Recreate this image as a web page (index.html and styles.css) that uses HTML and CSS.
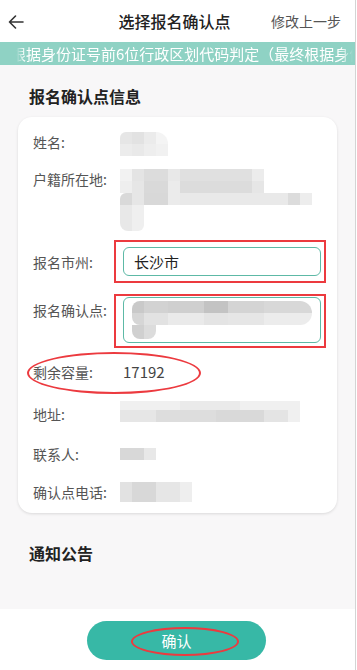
FILE: index.html
```html
<!DOCTYPE html>
<html lang="zh">
<head>
<meta charset="utf-8">
<link rel="stylesheet" href="styles.css">
</head>
<body>
<div class="app">
  <header class="topbar">
    <span class="back">
      <svg width="16" height="14" viewBox="0 0 16 14"><path d="M15 7H1.5M7.5 1L1.5 7l6 6" fill="none" stroke="#333" stroke-width="1.6" stroke-linecap="round" stroke-linejoin="round"/></svg>
    </span>
    <h1 class="title">选择报名确认点</h1>
    <span class="prev">修改上一步</span>
  </header>
  <div class="notice"><span class="notice-text">根据身份证号前6位行政区划代码判定（最终根据身份证号确认）</span></div>
  <main class="content">
    <h2 class="sec-title">报名确认点信息</h2>
    <section class="card">
      <div class="row r1">
        <span class="label">姓名:</span>
        <span class="blur b-name"></span>
      </div>
      <div class="row r2">
        <span class="label">户籍所在地:</span>
        <span class="blur-stack">
          <span class="blur b-h1"></span>
          <span class="blur b-h2"></span>
          <span class="blur b-h3"></span>
        </span>
      </div>
      <div class="row r3">
        <span class="label">报名市州:</span>
        <span class="field">长沙市</span>
        <span class="mark-rect m1"></span>
      </div>
      <div class="row r4">
        <span class="label">报名确认点:</span>
        <span class="field tall">
          <span class="blur b-p1"></span>
          <span class="blur b-p2"></span>
        </span>
        <span class="mark-rect m2"></span>
      </div>
      <div class="row r5">
        <span class="label">剩余容量:</span>
        <span class="value">17192</span>
        <span class="mark-oval"></span>
      </div>
      <div class="row r6">
        <span class="label">地址:</span>
        <span class="blur b-addr"></span>
      </div>
      <div class="row r7">
        <span class="label">联系人:</span>
        <span class="blur b-contact"></span>
      </div>
      <div class="row r8">
        <span class="label">确认点电话:</span>
        <span class="blur b-phone"></span>
      </div>
    </section>
    <h2 class="sec-title notice-title">通知公告</h2>
  </main>
  <footer class="bottom">
    <button class="confirm">确认<span class="btn-oval"></span></button>
  </footer>
</div>
</body>
</html>
```
FILE: styles.css
```css
* { box-sizing: border-box; }
html, body { margin: 0; padding: 0; background: #fff; }
body {
  font-family: "Noto Sans CJK SC", "Noto Sans", sans-serif;
  color: #333;
}
.app {
  width: 356px;
  height: 670px;
  border-right: 1px solid #d4d4d4;
  display: flex;
  flex-direction: column;
  overflow: hidden;
}
.topbar {
  height: 42px;
  display: flex;
  align-items: center;
  background: #fff;
}
.back { width: 40px; padding-left: 8px; display: flex; align-items: center; padding-top: 1px; }
.title {
  margin: 0;
  flex: 1;
  text-align: center;
  font-size: 16px;
  font-weight: 500;
  color: #222;
  padding-left: 40px;
}
.prev { font-size: 14px; color: #555; padding-right: 14px; width: 86px; text-align: right; }
.notice {
  height: 23px;
  background: #8fd2c4;
  overflow: hidden;
  white-space: nowrap;
  display: flex;
  align-items: center;
  padding-left: 11px;
}
.notice-text {
  color: #fff;
  font-size: 15px;
  line-height: 23px;
  -webkit-mask-image: linear-gradient(90deg, transparent 0, transparent 5px, #000 14px, #000 330px, transparent 342px);
  mask-image: linear-gradient(90deg, transparent 0, transparent 5px, #000 14px, #000 330px, transparent 342px);
}
.content {
  flex: 1;
  background: #f8f7f8;
  padding: 20px 18px 0 18px;
}
.sec-title {
  margin: 0;
  font-size: 16px;
  font-weight: 700;
  color: #222;
  line-height: 22px;
  padding-left: 11px;
}
.card {
  margin-top: 10px;
  background: #fff;
  border-radius: 14px;
  box-shadow: 0 1px 3px rgba(0,0,0,0.12);
  padding: 15px 15px 11px 15px;
}
.row { display: flex; align-items: flex-start; position: relative; }
.label { width: 90px; flex: none; font-size: 14px; color: #555; line-height: 20px; }
.value { font-size: 15px; color: #444; line-height: 20px; }
.r2 { margin-top: 13px; }
.r3 { margin-top: 16px; align-items: center; }
.r4 { margin-top: 21px; }
.r4 .label { padding-top: 3px; }
.r5 { margin-top: 19px; }
.r6 { margin-top: 19px; }
.r6 .label { padding-top: 3px; }
.r7 { margin-top: 20px; }
.r8 { margin-top: 18px; }

.field {
  width: 198px;
  height: 29px;
  border: 1px solid #5db9a6;
  border-radius: 6px;
  font-size: 15px;
  color: #222;
  display: flex;
  align-items: center;
  padding-left: 10px;
}
.field.tall {
  height: 46px;
  flex-direction: column;
  align-items: flex-start;
  justify-content: flex-start;
  padding: 3px 0 0 8px;
}

.blur { display: block; background: #e6e6e6; }
.b-name {
  margin-left: -3px;
  width: 48px; height: 24px;
  border-radius: 6px 12px 0 0;
  background:
    linear-gradient(90deg, #e6e6e6 0 12px, #e2e2e2 12px 24px, #ebebeb 24px 36px, #f4f4f4 36px 48px) top / 100% 12px no-repeat,
    linear-gradient(90deg, #ececec 0 12px, #e9e9e9 12px 24px, #eeeeee 24px 36px, #f1f1f1 36px 48px) bottom / 100% 12px no-repeat;
}
.blur-stack { display: flex; flex-direction: column; margin-left: -3px; }
.b-h1 { width: 144px; height: 24px;
  background:
    linear-gradient(90deg, #f2f2f2 0 12px, #e4e4e4 12px 24px, #dcdcdc 24px 48px, #e8e8e8 48px 60px, #e0e0e0 60px 132px, #ececec 132px 144px) top / 100% 12px no-repeat,
    linear-gradient(90deg, #eeeeee 0 12px, #e6e6e6 12px 24px, #d9d9d9 24px 48px, #ebebeb 48px 60px, #dcdcdc 60px 132px, #e6e6e6 132px 144px) bottom / 100% 12px no-repeat; }
.b-h2 { width: 192px; height: 12px; border-radius: 6px 0 0 0;
  background: linear-gradient(90deg, #d9d9d9 0 12px, #e6e6e6 12px 24px, #d8d8d8 24px 48px, #ebebeb 48px 60px, #e9e9e9 60px 168px, #dcdcdc 168px 180px, #ededed 180px 192px); }
.b-h3 { width: 24px; height: 26px; border-radius: 0 0 6px 8px;
  background: linear-gradient(90deg, #e8e8e8 0 12px, #efefef 12px 24px); }
.b-p1 { width: 180px; height: 24px; border-radius: 8px 12px 12px 8px;
  background:
    linear-gradient(90deg, #c9c9c9 0 12px, #d2d2d2 12px 36px, #cfcfcf 36px 72px, #c3c3c3 72px 96px, #d4d4d4 96px 132px, #d8d8d8 132px 180px) top / 100% 12px no-repeat,
    linear-gradient(90deg, #d6d6d6 0 12px, #e2e2e2 12px 36px, #eaeaea 36px 72px, #e4e4e4 72px 96px, #e6e6e6 96px 132px, #ececec 132px 180px) bottom / 100% 12px no-repeat; }
.b-p2 { width: 24px; height: 14px; border-radius: 0 0 8px 8px;
  background: linear-gradient(90deg, #d0d0d0 0 12px, #dcdcdc 12px 24px); }
.b-addr { margin-left: -3px; width: 180px; height: 21px;
  background:
    linear-gradient(90deg, #f0f0f0 0 60px, #eaeaea 60px 120px, #f0f0f0 120px 180px) top / 100% 9px no-repeat,
    linear-gradient(90deg, #e6e6e6 0 36px, #dddddd 36px 96px, #d9d9d9 96px 144px, #e4e4e4 144px 168px, #f0f0f0 168px 180px) bottom / 100% 12px no-repeat; }
.r7 .blur { margin-top: 4px; }
.b-contact { margin-left: -3px; width: 36px; height: 12px;
  background: linear-gradient(90deg, #d8d8d8 0 24px, #e8e8e8 24px 36px); }
.b-phone { margin-left: -3px; width: 72px; height: 20px;
  background: linear-gradient(90deg, #e2e2e2 0 12px, #d8d8d8 12px 36px, #e6e6e6 36px 60px, #eeeeee 60px 72px); }

.mark-rect {
  position: absolute;
  border: 2.5px solid #ec3a3f;
  pointer-events: none;
}
.m1 { left: 81px; top: -7px; width: 212px; height: 43px; }
.m2 { left: 81px; top: -3px; width: 212px; height: 54px; }
.mark-oval {
  position: absolute;
  left: -6px; top: -10px;
  width: 174px; height: 42px;
  border: 2px solid #ec3a3f;
  border-radius: 50%;
}
.notice-title { margin-top: 29px; }

.bottom {
  height: 61px;
  background: #fff;
  display: flex;
  justify-content: center;
  padding-top: 12px;
  padding-right: 1px;
}
.confirm {
  position: relative;
  width: 179px;
  height: 39px;
  border: none;
  border-radius: 20px;
  background: #37b8a6;
  color: #fff;
  font-family: "Noto Sans CJK SC", sans-serif;
  font-size: 15px;
  padding: 0;
  margin-left: -1px;
}
.btn-oval {
  position: absolute;
  left: 44px; top: 6px;
  width: 108px; height: 29px;
  border: 2px solid #ec3a3f;
  border-radius: 50%;
}
```
